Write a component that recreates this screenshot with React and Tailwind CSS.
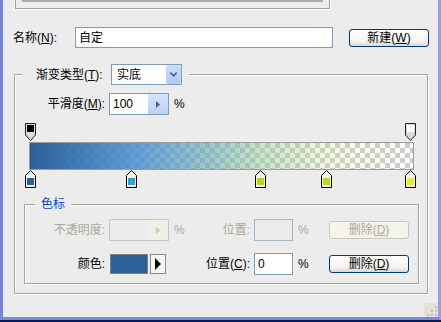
import { ChevronDown } from 'lucide-react'

const colorStops = [
  { left: 'left-[10px]', color: '#2b6099' },
  { left: 'left-[111px]', color: '#2aa3d3' },
  { left: 'left-[240px]', color: '#b4d616' },
  { left: 'left-[306px]', color: '#b9d81e' },
  { left: 'left-[390px]', color: '#e6ee25' },
]

function ColorStop({ color }) {
  return (
    <svg width="11" height="18" viewBox="0 0 11 18">
      <path d="M5.5 0.5 L10.5 5.5 V17.5 H0.5 V5.5 Z" fill="#f2f2f2" stroke="#000" />
      <rect x="2" y="8" width="7" height="7" fill={color} />
    </svg>
  )
}

function OpacityStop({ color }) {
  return (
    <svg width="11" height="19" viewBox="0 0 11 19">
      <path d="M0.5 0.5 H10.5 V12 L5.5 17.5 L0.5 12 Z" fill="#dcdcdc" stroke="#222" />
      <rect x="2" y="2" width="7" height="7" fill={color} />
    </svg>
  )
}

function Arrow({ color = '#4d6185' }) {
  return (
    <svg width="4" height="7" viewBox="0 0 4 7">
      <path d="M0 0 L4 3.5 L0 7 Z" fill={color} />
    </svg>
  )
}

function XpButton({ children, disabled }) {
  return (
    <div
      className={
        disabled
          ? 'shrink-0 w-[80px] h-[18px] flex items-center justify-center rounded-[3px] border border-[#c9c7ba] bg-[#f5f4ea] text-[#aca899]'
          : 'shrink-0 w-[80px] h-[18px] flex items-center justify-center rounded-[3px] border border-[#003c74] bg-[linear-gradient(#ffffff,#f4f4f0_70%,#dcd8cf)] text-black'
      }
    >
      {children}
    </div>
  )
}

export default function App() {
  return (
    <div className="w-[441px] h-[322px] flex flex-col bg-[#0b1a55] text-[12px] leading-[14px] text-black [font-family:'Liberation_Sans','Noto_Sans_CJK_SC',sans-serif]">
      <div className="h-[320px] flex flex-col border-l-[3px] border-l-[#7683dc] border-r-[3px] border-r-[#93a0e8] border-b-[3px] border-b-[#7c87de] bg-[#ececec]">
        {/* top preview panel */}
        <div className="ml-[11px] w-[317px] h-[10px] border-x border-b border-white">
          <div className="h-[9px] border-x border-b border-[#a3a39b] px-[6px]">
            <div className="h-[2px] bg-[#aeada4]" />
          </div>
        </div>

        {/* name row */}
        <div className="mt-[17px] flex items-center pl-[10px]">
          <span className="w-[62px] shrink-0">名称(<u>N</u>):</span>
          <div className="w-[258px] h-[21px] border border-[#7f9db9] bg-white flex items-center pl-[3px]">自定</div>
          <div className="ml-[16px]">
            <XpButton>新建(<u>W</u>)</XpButton>
          </div>
        </div>

        {/* gradient group */}
        <fieldset className="mt-[16px] ml-[11px] w-[414px] border border-[#a5a59c] shadow-[inset_1px_1px_0_#fff,1px_1px_0_#fff]">
          <legend className="ml-[7px] pl-[14px] pr-[7px] bg-[#ececec] flex items-center">
            <span className="w-[75px]">渐变类型(<u>T</u>):</span>
            <div className="w-[71px] h-[21px] border border-[#7f9db9] bg-white flex items-center">
              <span className="flex-1 pl-[5px]">实底</span>
              <div className="w-[15px] h-[19px] rounded-[2px] bg-[linear-gradient(#cdddfc,#b3c7f4)] flex items-center justify-center">
                <ChevronDown size={11} strokeWidth={3.5} color="#4d6185" />
              </div>
            </div>
          </legend>

          <div className="mt-[8px] flex items-center">
            <span className="w-[90px] text-right">平滑度(<u>M</u>):</span>
            <div className="ml-[4px] w-[60px] h-[22px] border border-[#7f9db9] bg-white flex items-center">
              <span className="flex-1 pl-[3px]">100</span>
              <div className="w-[20px] h-[20px] bg-[linear-gradient(#d6e3fb,#bccff6)] flex items-center justify-center">
                <Arrow />
              </div>
            </div>
            <span className="ml-[5px]">%</span>
          </div>

          {/* gradient editor */}
          <div className="mt-[8px]">
            <div className="relative h-[19px]">
              <div className="absolute left-[10px] top-0"><OpacityStop color="#000" /></div>
              <div className="absolute left-[390px] top-0"><OpacityStop color="#fff" /></div>
            </div>
            <div className="ml-[14px] w-[385px] h-[28px] border border-[#9c9c9c] bg-[linear-gradient(to_right,rgba(43,96,154,1)_0%,rgba(70,142,208,0.85)_27%,rgba(150,205,150,0.5)_61%,rgba(205,230,140,0.25)_78%,rgba(232,240,36,0)_100%),repeating-conic-gradient(#cccccc_0_25%,#ffffff_0_50%)] [background-size:100%_100%,10px_10px]" />
            <div className="relative h-[18px]">
              {colorStops.map((s, i) => (
                <div key={i} className={`absolute top-0 ${s.left}`}>
                  <ColorStop color={s.color} />
                </div>
              ))}
            </div>
          </div>

          {/* stop group */}
          <fieldset className="mt-[9px] mb-[9px] ml-[9px] w-[395px] border border-[#a5a59c] shadow-[inset_1px_1px_0_#fff,1px_1px_0_#fff] pb-[8px]">
            <legend className="ml-[10px] px-[6px] bg-[#ececec] text-[#0046d5]">色标</legend>

            <div className="mt-[8px] flex items-center text-[#aca899]">
              <span className="w-[80px] shrink-0 text-right">不透明度:</span>
              <div className="ml-[4px] w-[60px] shrink-0 h-[22px] border border-[#c9c7ba] bg-[#ececec] flex items-center justify-end">
                <div className="w-[20px] h-[20px] bg-[#f0efe6] flex items-center justify-center">
                  <Arrow color="#c9c7ba" />
                </div>
              </div>
              <span className="w-[29px] shrink-0 pl-[5px]">%</span>
              <span className="w-[52px] shrink-0 text-right">位置:</span>
              <div className="ml-[4px] w-[39px] shrink-0 h-[22px] border border-[#9fb5cc] bg-[#ececec]" />
              <span className="w-[36px] shrink-0 pl-[5px]">%</span>
              <XpButton disabled>删除(<u>D</u>)</XpButton>
            </div>

            <div className="mt-[12px] flex items-center">
              <span className="w-[80px] shrink-0 text-right">颜色:</span>
              <div className="ml-[5px] w-[38px] shrink-0 h-[20px] border border-[#808080] bg-[#2b6099]" />
              <div className="ml-[2px] w-[16px] shrink-0 h-[20px] border border-[#8a8a8a] bg-[#f6f6f6] flex items-center justify-center">
                <svg width="6" height="12" viewBox="0 0 6 12"><path d="M0 0 L6 6 L0 12 Z" fill="#000" /></svg>
              </div>
              <span className="w-[84px] shrink-0 text-right">位置(<u>C</u>):</span>
              <div className="ml-[4px] w-[39px] shrink-0 h-[22px] border border-[#7f9db9] bg-white flex items-center pl-[3px]">0</div>
              <span className="w-[36px] shrink-0 pl-[5px]">%</span>
              <XpButton>删除(<u>D</u>)</XpButton>
            </div>
          </fieldset>
        </fieldset>

        {/* resize grip */}
        <div className="mt-auto self-end w-[14px] h-[14px] bg-[#e4e2d6] flex items-end justify-end">
          <svg width="12" height="12" viewBox="0 0 12 12">
            <rect x="9" y="1" width="2" height="2" fill="#c6c3b3" />
            <rect x="5" y="5" width="2" height="2" fill="#c6c3b3" />
            <rect x="9" y="5" width="2" height="2" fill="#c6c3b3" />
            <rect x="1" y="9" width="2" height="2" fill="#c6c3b3" />
            <rect x="5" y="9" width="2" height="2" fill="#c6c3b3" />
            <rect x="9" y="9" width="2" height="2" fill="#c6c3b3" />
          </svg>
        </div>
      </div>
    </div>
  )
}
